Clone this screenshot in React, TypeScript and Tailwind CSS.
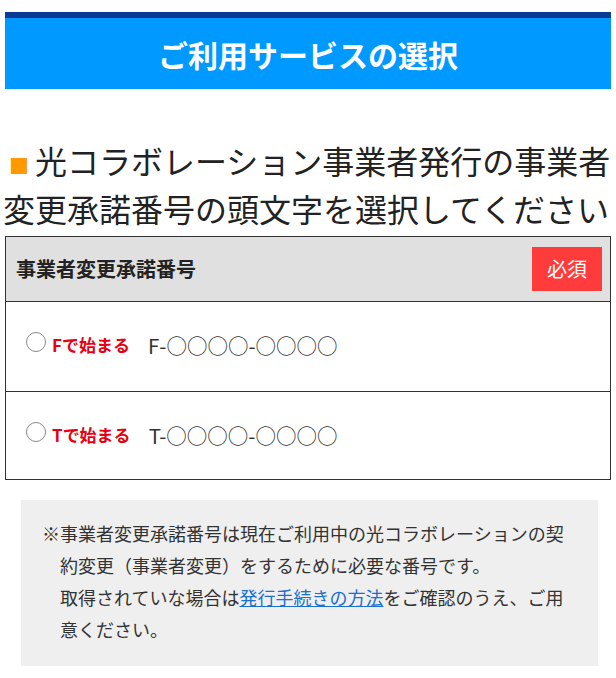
import React from "react";

const font = { fontFamily: '"Noto Sans CJK JP", "Noto Sans", sans-serif' };

function Radio() {
  return (
    <span className="inline-block w-[20px] h-[20px] rounded-full border border-[#8a8a8a] bg-white shrink-0 mb-[6px]" />
  );
}

function Row({ letter, pb }: { letter: string; pb: string }) {
  return (
    <div className={`flex items-center pl-[20px] pt-[29px] ${pb}`}>
      <Radio />
      <span className="ml-[6px] text-[17px] leading-[28px] font-bold text-[#e60012]">
        {letter}で始まる
      </span>
      <span className="ml-[18px] text-[20.5px] leading-[28px] text-[#333]">
        {letter}-○○○○-○○○○
      </span>
    </div>
  );
}

export default function App() {
  return (
    <div className="w-[616px] bg-white pb-[11px]" style={font}>
      <div className="mx-[5px] mt-[12px] border-t-[6px] border-[#0a3a94] bg-[#0099ff] h-[77px] flex items-center justify-center">
        <h1 className="text-white font-bold text-[30px] leading-[40px]">ご利用サービスの選択</h1>
      </div>

      <h2 className="mt-[47px] px-[3px] text-[32px] leading-[48px] text-[#222] font-normal">
        <span className="inline-block w-[32px] text-center text-[20px] leading-[20px] text-[#ff9900]">■</span>
        光コラボレーション事業者発行の事業者
        <br />
        変更承諾番号の頭文字を選択してください
      </h2>

      <div className="mx-[5px] mt-[4px] border border-[#333]">
        <div className="flex items-center justify-between bg-[#e0e0e0] pl-[10px] pr-[8px] py-[10px] border-b border-[#333]">
          <span className="text-[20px] font-bold text-[#222]">事業者変更承諾番号</span>
          <span className="w-[70px] h-[44px] bg-[#ff3b3b] text-white text-[20px] flex items-center justify-center">
            必須
          </span>
        </div>
        <div className="border-b border-[#333]">
          <Row letter="F" pb="pb-[32px]" />
        </div>
        <Row letter="T" pb="pb-[30px]" />
      </div>

      <div className="ml-[21px] mr-[18px] mt-[20px] bg-[#efefef] pt-[17px] pb-[21px] pl-[39px] pr-[20px] text-[18px] leading-[32px] text-[#333]">
        <p className="-indent-[18px]">
          ※事業者変更承諾番号は現在ご利用中の光コラボレーションの契約変更（事業者変更）をするために必要な番号です。
        </p>
        <p>
          取得されていな場合は
          <a href="#" className="text-[#1a6fd1] underline">発行手続きの方法</a>
          をご確認のうえ、ご用意ください。
        </p>
      </div>
    </div>
  );
}
